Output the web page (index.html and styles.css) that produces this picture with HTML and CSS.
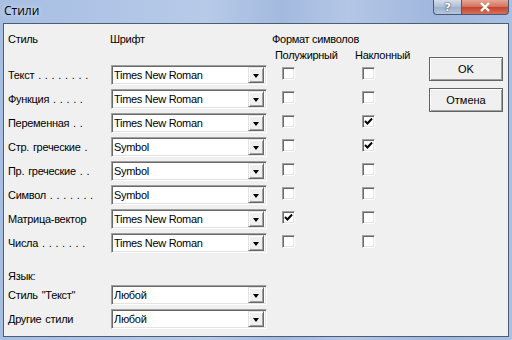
FILE: index.html
```html
<!DOCTYPE html>
<html lang="ru">

<head>
    <meta charset="UTF-8">
    <title>Стили</title>
    <link rel="stylesheet" href="styles.css">
</head>

<body>

    <div class="window">
        <div class="titlebar">
            <span class="title">Стили</span>
            <div class="caption-buttons">
                <div class="cap-btn help">?</div>
                <div class="cap-btn close">
                    <svg width="12" height="10" viewBox="0 0 12 10">
                        <path d="M2 1 L10 9 M10 1 L2 9" stroke="#fff" stroke-width="2.4" fill="none" />
                    </svg>
                </div>
            </div>
        </div>

        <div class="client">
            <div class="form">
                <div class="head">
                    <span class="col-label">Стиль</span>
                    <span class="col-font">Шрифт</span>
                    <span>Формат символов</span>
                </div>
                <div class="subhead">
                    <span class="sub-col">Полужирный</span>
                    <span>Наклонный</span>
                </div>

                <div class="row">
                    <span class="label">Текст . . . . . . . .</span>
                    <div class="combo"><span class="combo-text">Times New Roman</span><span class="drop"><i></i></span></div>
                    <div class="cell first"><span class="check"></span></div>
                    <div class="cell"><span class="check"></span></div>
                </div>
                <div class="row">
                    <span class="label">Функция . . . . .</span>
                    <div class="combo"><span class="combo-text">Times New Roman</span><span class="drop"><i></i></span></div>
                    <div class="cell first"><span class="check"></span></div>
                    <div class="cell"><span class="check"></span></div>
                </div>
                <div class="row">
                    <span class="label">Переменная . .</span>
                    <div class="combo"><span class="combo-text">Times New Roman</span><span class="drop"><i></i></span></div>
                    <div class="cell first"><span class="check"></span></div>
                    <div class="cell"><span class="check checked"><svg width="9" height="9" viewBox="0 0 9 9"><path d="M1 4 L3.5 6.5 L8 1.5" stroke="#000" stroke-width="2" fill="none" /></svg></span></div>
                </div>
                <div class="row">
                    <span class="label">Стр. греческие .</span>
                    <div class="combo"><span class="combo-text">Symbol</span><span class="drop"><i></i></span></div>
                    <div class="cell first"><span class="check"></span></div>
                    <div class="cell"><span class="check checked"><svg width="9" height="9" viewBox="0 0 9 9"><path d="M1 4 L3.5 6.5 L8 1.5" stroke="#000" stroke-width="2" fill="none" /></svg></span></div>
                </div>
                <div class="row">
                    <span class="label">Пр. греческие . .</span>
                    <div class="combo"><span class="combo-text">Symbol</span><span class="drop"><i></i></span></div>
                    <div class="cell first"><span class="check"></span></div>
                    <div class="cell"><span class="check"></span></div>
                </div>
                <div class="row">
                    <span class="label">Символ . . . . . . .</span>
                    <div class="combo"><span class="combo-text">Symbol</span><span class="drop"><i></i></span></div>
                    <div class="cell first"><span class="check"></span></div>
                    <div class="cell"><span class="check"></span></div>
                </div>
                <div class="row">
                    <span class="label">Матрица-вектор</span>
                    <div class="combo"><span class="combo-text">Times New Roman</span><span class="drop"><i></i></span></div>
                    <div class="cell first"><span class="check checked"><svg width="9" height="9" viewBox="0 0 9 9"><path d="M1 4 L3.5 6.5 L8 1.5" stroke="#000" stroke-width="2" fill="none" /></svg></span></div>
                    <div class="cell"><span class="check"></span></div>
                </div>
                <div class="row">
                    <span class="label">Числа . . . . . . .</span>
                    <div class="combo"><span class="combo-text">Times New Roman</span><span class="drop"><i></i></span></div>
                    <div class="cell first"><span class="check"></span></div>
                    <div class="cell"><span class="check"></span></div>
                </div>

                <div class="lang">Язык:</div>
                <div class="row">
                    <span class="label">Стиль "Текст"</span>
                    <div class="combo"><span class="combo-text">Любой</span><span class="drop"><i></i></span></div>
                </div>
                <div class="row">
                    <span class="label">Другие стили</span>
                    <div class="combo"><span class="combo-text">Любой</span><span class="drop"><i></i></span></div>
                </div>
            </div>

            <div class="buttons">
                <button class="btn">OK</button>
                <button class="btn">Отмена</button>
            </div>
        </div>
    </div>

</body>

</html>
```

FILE: styles.css
```css
body {
    margin: 0;
    font-family: "Liberation Sans", Arial, sans-serif;
    font-size: 11px;
    letter-spacing: -0.3px;
    color: #000;
}

.window {
    width: 512px;
    height: 340px;
    box-sizing: border-box;
    padding: 0 3px 3px 3px;
    display: flex;
    flex-direction: column;
    /* размытое стекло aero */
    background: linear-gradient(90deg, #a7bee3 0%, #afc4e6 20%, #b7cae8 40%, #a3badf 55%, #b3c6e6 68%, #a0b7dd 85%, #a9bfe3 100%);
}

.titlebar {
    height: 23px;
    flex-shrink: 0;
    display: flex;
    justify-content: space-between;
    align-items: flex-start;
}

.title {
    font-family: "Open Sans", "Liberation Sans", sans-serif;
    font-size: 12px;
    letter-spacing: 0;
    line-height: 16px;
    margin: 3px 0 0 1px;
    text-shadow: 0 0 6px rgba(255, 255, 255, 0.9);
}

.caption-buttons {
    display: flex;
}

.cap-btn {
    height: 15px;
    box-sizing: border-box;
    border: 1px solid #4a5a72;
    border-top: none;
    display: flex;
    align-items: center;
    justify-content: center;
}

.help {
    width: 28px;
    border-right: none;
    border-radius: 0 0 0 4px;
    background: linear-gradient(#d5deeb, #aebdd3 50%, #9cb0cc 51%, #b7c7de);
    color: #fff;
    font-family: "DejaVu Sans", sans-serif;
    font-weight: bold;
    font-size: 11px;
    text-shadow: 0 0 2px #3a4a62, 0 0 1px #3a4a62;
}

.close {
    width: 48px;
    border-radius: 0 0 4px 0;
    background: linear-gradient(#e8a795, #d2705c 50%, #c4422c 51%, #d8705a);
}

.client {
    flex: 1;
    display: flex;
    justify-content: space-between;
    background-color: #f0f0f0;
    border: 1px solid #4d5d74;
    padding: 0 5px 0 4px;
}

.form {
    padding-top: 8px;
}

.head {
    display: flex;
    line-height: 14px;
}

.col-label {
    width: 102px;
}

.col-font {
    width: 162px;
}

.subhead {
    display: flex;
    line-height: 14px;
    margin-top: 2px;
    margin-bottom: 2px;
    padding-left: 267px;
}

.sub-col {
    width: 80px;
}

.row {
    display: flex;
    align-items: flex-start;
    height: 24px;
}

.label {
    width: 103px;
    line-height: 14px;
    margin-top: 4px;
    word-spacing: 1.2px;
}

.combo {
    width: 156px;
    height: 20px;
    margin-top: 1px;
    box-sizing: border-box;
    background: #fff;
    border-top: 1px solid #a0a0a0;
    border-left: 1px solid #a0a0a0;
    border-right: 1px solid #fff;
    border-bottom: 1px solid #fff;
    box-shadow: inset 1px 1px 0 #696969, inset -1px -1px 0 #e3e3e3;
    display: flex;
    align-items: center;
    padding: 0 2px 0 2px;
}

.combo-text {
    flex: 1;
    line-height: 14px;
}

.drop {
    width: 16px;
    height: 16px;
    box-sizing: border-box;
    background: #f0f0f0;
    border-top: 1px solid #e3e3e3;
    border-left: 1px solid #e3e3e3;
    border-right: 1px solid #696969;
    border-bottom: 1px solid #696969;
    box-shadow: inset 1px 1px 0 #fff, inset -1px -1px 0 #a0a0a0;
    display: flex;
    align-items: center;
    justify-content: center;
}

.drop i {
    width: 0;
    height: 0;
    border-left: 3.5px solid transparent;
    border-right: 3.5px solid transparent;
    border-top: 4px solid #000;
    margin-top: 1px;
}

.cell {
    width: 80px;
}

.cell.first {
    margin-left: 15px;
}

.cell:last-child {
    width: auto;
}

.check {
    display: flex;
    align-items: center;
    justify-content: center;
    width: 13px;
    height: 13px;
    box-sizing: border-box;
    margin-top: 3px;
    background: #fff;
    border-top: 1px solid #a0a0a0;
    border-left: 1px solid #a0a0a0;
    border-right: 1px solid #fff;
    border-bottom: 1px solid #fff;
    box-shadow: inset 1px 1px 0 #696969, inset -1px -1px 0 #e3e3e3;
}

.lang {
    line-height: 14px;
    margin-top: 13px;
    margin-bottom: 1px;
}

.buttons {
    flex-shrink: 0;
    display: flex;
    flex-direction: column;
    gap: 7px;
    padding-top: 33px;
}

.btn {
    width: 74px;
    height: 24px;
    margin: 0;
    padding: 0;
    font-family: "Liberation Sans", Arial, sans-serif;
    font-size: 11px;
    color: #000;
    background: #f0f0f0;
    border: 1px solid #646464;
    box-shadow: inset 1px 1px 0 #fff, inset -1px -1px 0 #a0a0a0;
}
```
